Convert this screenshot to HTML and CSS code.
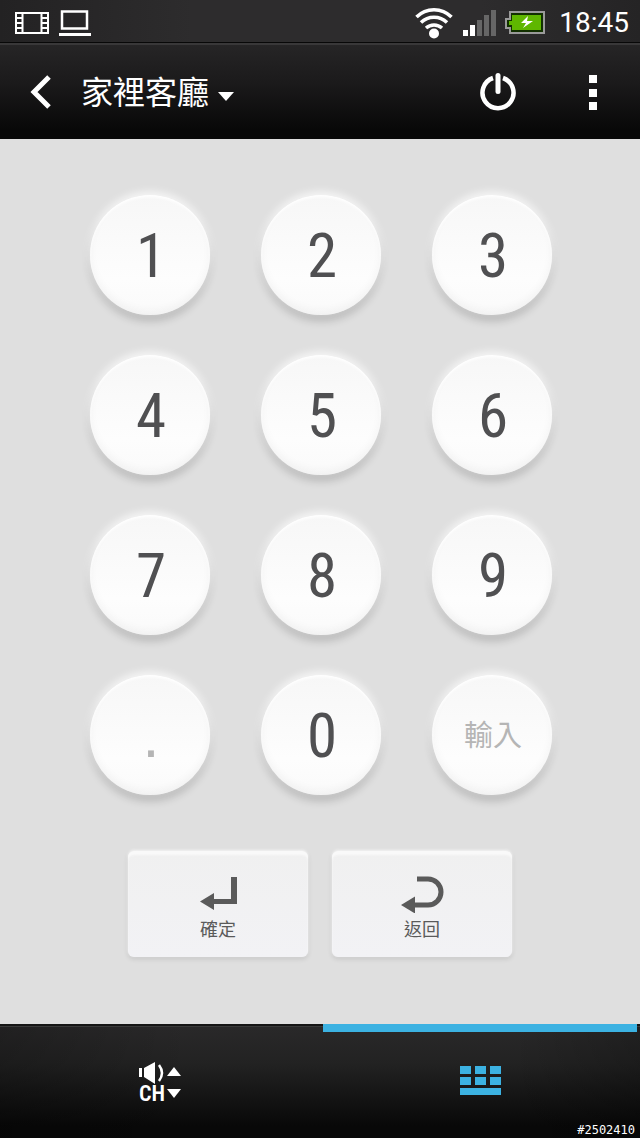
FILE: index.html
```html
<!DOCTYPE html>
<html lang="zh-Hant">
<head>
	<meta charset="utf-8">
	<meta name="viewport" content="width=device-width, initial-scale=1">
	<title>家裡客廳</title>
	<link rel="stylesheet" href="styles.css">
</head>
<body>
	<div class="status-bar">
		<svg width="34" height="22" viewBox="0 0 34 22" fill="none" stroke="#fff" stroke-width="2">
			<path d="M1 1h32v20H1zM7.500 1v20M26.500 1v20M1 6h6M1 11h6M1 16h6M27 6h6M27 11h6M27 16h6"/>
		</svg>
		<svg width="32" height="26" viewBox="0 0 32 26">
			<path d="M3 1.500h25v17H3z" fill="none" stroke="#fff" stroke-width="2.500"/>
			<path d="M0 23h32v3H0z" fill="#fff"/>
		</svg>
		<div class="status-right">
			<svg width="38" height="34" viewBox="0 0 38 34" fill="none" stroke="#fff" stroke-width="3.500">
				<path d="M1.500 11a24.500 24.500 0 0 1 35 0M6 16.500a18.500 18.500 0 0 1 26 0M11 22a12 12 0 0 1 16 0"/>
				<circle cx="19" cy="27.500" r="5" fill="#fff" stroke="none"/>
			</svg>
			<svg width="34" height="26" viewBox="0 0 34 26">
				<path d="M1 20h5v6H1zM8 15h5v11H8z" fill="#fff"/>
				<path d="M15 10h5v16h-5zM22 5h5v21h-5zM29 0h5v26h-5z" fill="#666"/>
			</svg>
			<svg class="battery" width="40" height="23" viewBox="0 0 40 23">
				<path d="M4 0h36v23H4v-5H0V7h4z" fill="#9a9a9a"/>
				<path d="M6 2h32v19H6v-5H2V9h4z" fill="#123000"/>
				<path d="M7 4h29v15H7v-5H4v-4h3z" fill="#5fb700"/>
				<path d="M23 5l-7 7h5l-3 5 10-7h-6z" fill="#fff"/>
			</svg>
			<span class="clock">18:45</span>
		</div>
	</div>

	<header class="action-bar">
		<button type="button" class="icon-button" aria-label="返回上頁">
			<svg width="22" height="34" viewBox="0 0 22 34" fill="none" stroke="#fff" stroke-width="5">
				<path d="M19 2L4 17l15 15"/>
			</svg>
		</button>
		<label class="room">
			<select class="room-select" aria-label="房間">
				<option>家裡客廳</option>
			</select>
			<svg class="room-caret" width="16" height="10" viewBox="0 0 16 10"><path d="M0 0h16L8 9z" fill="#fff"/></svg>
		</label>
		<button type="button" class="icon-button power" aria-label="電源">
			<svg width="38" height="40" viewBox="0 0 38 40" fill="none" stroke="#fff" stroke-width="4.500">
				<path d="M14 6a15.500 15.500 0 1 0 10 0"/>
				<path d="M19 3.500v16" stroke-width="5" stroke-linecap="round"/>
			</svg>
		</button>
		<button type="button" class="icon-button" aria-label="選單">
			<svg width="8" height="35" viewBox="0 0 8 35"><path d="M0 0h8v8H0zM0 14h8v8H0zM0 27h8v8H0z" fill="#fff"/></svg>
		</button>
	</header>

	<main class="remote">
		<div class="keypad">
			<button type="button" class="key">1</button>
			<button type="button" class="key">2</button>
			<button type="button" class="key">3</button>
			<button type="button" class="key">4</button>
			<button type="button" class="key">5</button>
			<button type="button" class="key">6</button>
			<button type="button" class="key">7</button>
			<button type="button" class="key">8</button>
			<button type="button" class="key">9</button>
			<button type="button" class="key key-dot" disabled>.</button>
			<button type="button" class="key">0</button>
			<button type="button" class="key key-text" disabled>輸入</button>
		</div>
		<div class="actions">
			<button type="button" class="action">
				<svg width="44" height="38" viewBox="0 0 44 38">
					<path d="M35 2h6v27H18v6L4 26.500 18 18v6h17z" fill="#5a5a5a"/>
				</svg>
				<span>確定</span>
			</button>
			<button type="button" class="action">
				<svg width="44" height="38" viewBox="0 0 44 38">
					<path d="M17 4h11a13 13 0 0 1 0 26H14" fill="none" stroke="#5a5a5a" stroke-width="5"/>
					<path d="M1 30l14-8.500v17z" fill="#5a5a5a"/>
				</svg>
				<span>返回</span>
			</button>
		</div>
	</main>

	<nav class="tabs">
		<a class="tab" href="#channel" aria-label="音量與頻道">
			<span class="channel">
				<svg width="26" height="22" viewBox="0 0 26 22">
					<path d="M0 6h3v9H0zM5 6l11-6v22L5 15z" fill="#fff"/>
					<path d="M20 3q6 8 0 16" fill="none" stroke="#fff" stroke-width="2.500"/>
				</svg>
				<svg width="14" height="16" viewBox="0 0 14 16"><path d="M0 11h14L7 2z" fill="#fff"/></svg>
				<span>CH</span>
				<svg width="14" height="9" viewBox="0 0 14 9"><path d="M0 0h14L7 9z" fill="#fff"/></svg>
			</span>
		</a>
		<a class="tab tab-active" href="#keypad" aria-label="數字鍵盤">
			<svg width="41" height="30" viewBox="0 0 41 30">
				<path d="M0 0h11v8H0zM15 0h11v8H15zM30 0h11v8H30zM0 11h11v8H0zM15 11h11v8H15zM30 11h11v8H30zM0 22h41v7H0z" fill="#3cb2e2"/>
			</svg>
		</a>
		<span class="photo-id">#2502410</span>
	</nav>
</body>
</html>
```
FILE: styles.css
```css
* {
	box-sizing: border-box;
}

body {
	display: flex;
	flex-direction: column;
	min-height: 100vh;
	margin: 0;
	background-color: #dfdfdf;
	color: #fff;
	font-family: Roboto, "Noto Sans CJK TC", sans-serif;
}

button,
select {
	padding: 0;
	border: none;
	background: none;
	color: inherit;
	font-family: inherit;
}

svg {
	display: block;
	flex: none;
}

.status-bar {
	display: flex;
	align-items: center;
	gap: 10px;
	height: 43px;
	padding: 3px 11px 0 15px;
	background: linear-gradient(90deg, #232223, #2d2c2d 30%, #2d2c2d 75%, #252425);
	border-bottom: 1px solid #080808;
}

.status-right {
	display: flex;
	align-items: center;
	gap: 9px;
	margin-left: auto;
}

.battery {
	margin-right: 5px;
}

.clock {
	font-size: 28px;
	line-height: 40px;
}

.action-bar {
	display: flex;
	align-items: center;
	height: 96px;
	padding: 0 43px 0 30px;
	background: linear-gradient(#262526, #1b1a1b 40%, #080808 90%);
	border-top: 2px solid #393839;
}

.icon-button {
	display: flex;
	cursor: pointer;
}

.room {
	display: flex;
	align-items: center;
	gap: 8px;
	margin-left: 29px;
}

.room-select {
	appearance: none;
	padding-top: 2px;
	font-size: 32px;
	line-height: 48px;
	cursor: pointer;
}

.room-caret {
	margin-top: 10px;
}

.power {
	margin-left: auto;
	margin-right: 72px;
}

.remote {
	flex: 1;
	padding: 56px 20px 40px;
}

.keypad {
	display: grid;
	grid-template-columns: repeat(3, 120px);
	justify-content: center;
	gap: 40px 51px;
	padding-left: 2px;
}

.key {
	height: 120px;
	padding: 2px 0 0 2px;
	border-radius: 50%;
	background: linear-gradient(#f7f7f7, #fdfdfd 70%, #fafafa);
	box-shadow:
		0 -3px 8px rgba(255, 255, 255, 0.8),
		0 6px 8px rgba(0, 0, 0, 0.18),
		inset 0 2px 3px #fff,
		inset 0 -4px 8px rgba(0, 0, 0, 0.04);
	color: #505052;
	font-family: "Roboto Condensed", "Liberation Sans Narrow", Roboto, sans-serif;
	font-size: 61px;
	line-height: 118px;
	cursor: pointer;
}

.key:disabled {
	color: #b5b5b5;
	cursor: default;
}

.key-dot {
	font-family: "Liberation Sans", sans-serif;
}

.key-text {
	padding-bottom: 6px;
	font-family: "Noto Sans CJK TC", sans-serif;
	font-size: 29px;
	line-height: 112px;
}

.actions {
	display: flex;
	justify-content: center;
	gap: 24px;
	margin-top: 56px;
}

.action {
	display: flex;
	flex-direction: column;
	align-items: center;
	width: 180px;
	height: 106px;
	padding-top: 24px;
	border-radius: 6px;
	background: linear-gradient(#f0f0f0, #f2f2f5);
	box-shadow:
		0 -1px 3px rgba(255, 255, 255, 0.8),
		0 2px 5px rgba(0, 0, 0, 0.12),
		inset 0 4px 2px #f9f9f9;
	color: #5a5a5a;
	font-size: 18px;
	line-height: 34px;
	cursor: pointer;
}

.tabs {
	position: relative;
	display: flex;
	height: 114px;
	background: linear-gradient(90deg, rgba(0, 0, 0, 0.2), transparent 30%, transparent 80%, rgba(0, 0, 0, 0.2)), linear-gradient(#2a292a, #222 35%, #080808 90%);
	box-shadow: inset 0 2px #151515, inset 0 3px #3a3a3a;
}

.tab {
	display: flex;
	flex: 1;
	align-items: center;
	justify-content: center;
	margin: 0 3px;
	border-top: 8px solid transparent;
	padding-bottom: 8px;
	color: #fff;
	text-decoration: none;
}

.tab-active {
	border-top-color: #3cb2e2;
}

.channel {
	display: grid;
	grid-template-columns: auto auto;
	align-items: center;
	gap: 0 2px;
	padding-top: 3px;
	font-family: "Roboto Condensed", "Liberation Sans Narrow", Roboto, sans-serif;
	font-size: 22px;
	font-weight: 600;
	line-height: 20px;
}

/* photo number stamped over the bottom corner */
.photo-id {
	position: absolute;
	right: 5px;
	bottom: 0;
	font-family: "DejaVu Sans Mono", monospace;
	font-size: 12px;
	line-height: 16px;
}
```
